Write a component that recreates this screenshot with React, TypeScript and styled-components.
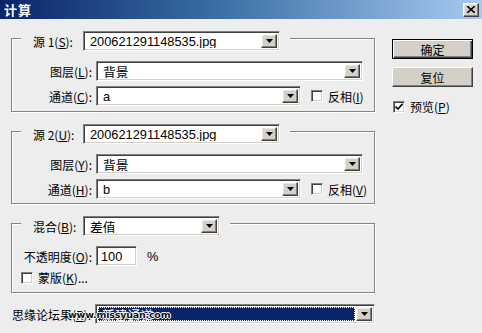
import React from "react";
import styled, { createGlobalStyle, css } from "styled-components";

const Global = createGlobalStyle`
  html, body { margin: 0; padding: 0; background: #ededed; }
  * { box-sizing: border-box; }
`;

const FONT = `"Liberation Sans", "Noto Sans CJK SC", sans-serif`;

const Window = styled.div`
  width: 482px;
  height: 333px;
  background: #ededed;
  overflow: hidden;
  font-family: ${FONT};
  font-size: 12px;
  color: #000;
  position: relative;
`;

const TitleBar = styled.div`
  height: 19px;
  background: linear-gradient(to right, #0a246a 0%, #3a6ea5 45%, #a6caf0 100%);
  display: flex;
  align-items: center;
  justify-content: space-between;
  padding: 0 3px 0 4px;
`;

const Title = styled.span`
  color: #fff;
  font-weight: bold;
  font-size: 13px;
  font-family: "Noto Sans CJK SC", sans-serif;
  letter-spacing: 1px;
`;

const raised = css`
  background: #d4d0c8;
  border-style: solid;
  border-width: 1px;
  border-color: #ffffff #404040 #404040 #ffffff;
  box-shadow: inset -1px -1px 0 #808080, inset 1px 1px 0 #e8e6e0;
`;

const CloseBtn = styled.div`
  ${raised};
  width: 16px;
  height: 14px;
  display: flex;
  align-items: center;
  justify-content: center;
`;

const Body = styled.div`
  display: flex;
  padding: 19px 0 0 11px;
`;

const Main = styled.div`
  width: 364px;
  display: flex;
  flex-direction: column;
`;

const Group = styled.div<{ $gap: number; $mb: number }>`
  border: 1px solid #848284;
  box-shadow: 1px 1px 0 #ffffff, inset 1px 1px 0 #ffffff;
  padding-bottom: ${(p) => p.$gap}px;
  margin-bottom: ${(p) => p.$mb}px;
  display: flex;
  flex-direction: column;
  gap: 5px;
`;

const Legend = styled.div`
  display: flex;
  align-items: center;
  gap: 5px;
  align-self: flex-start;
  margin: -8px 0 5px 9px;
  padding: 0 10px 0 12px;
  background: #ededed;
`;

const Row = styled.div<{ $h?: number }>`
  display: flex;
  align-items: center;
  height: ${(p) => p.$h ?? 20}px;
`;

const Label = styled.span<{ $w?: number }>`
  ${(p) => (p.$w ? `width: ${p.$w}px;` : "")}
  text-align: right;
  white-space: nowrap;
  font-family: "Noto Sans CJK SC", sans-serif;
  font-size: 12px;
  margin-right: 4px;
  u { text-decoration: underline; text-underline-offset: 1px; }
`;

const LegendLabel = styled.span`
  min-width: 45px;
  white-space: nowrap;
  font-family: "Noto Sans CJK SC", sans-serif;
  font-size: 12px;
`;

const sunken = css`
  border-style: solid;
  border-width: 1px;
  border-color: #808080 #ffffff #ffffff #808080;
  box-shadow: inset 1px 1px 0 #404040, inset -1px -1px 0 #d4d0c8;
`;

const ComboBox = styled.div<{ $w: number }>`
  ${sunken};
  width: ${(p) => p.$w}px;
  height: 20px;
  background: #fff;
  display: flex;
  align-items: stretch;
  padding: 2px;
`;

const ComboText = styled.div<{ $sel?: boolean }>`
  flex: 1;
  display: flex;
  align-items: center;
  padding-left: 4px;
  font-family: "Liberation Sans", "Noto Sans CJK SC", sans-serif;
  font-size: 12.8px;
  white-space: nowrap;
  overflow: hidden;
  ${(p) =>
    p.$sel
      ? css`
          background: #0a246a;
          color: #fff;
          outline: 1px dotted #ffffff;
          outline-offset: -1px;
          margin-right: 1px;
        `
      : ""}
`;

const ArrowBtn = styled.div`
  ${raised};
  width: 16px;
  display: flex;
  align-items: center;
  justify-content: center;
`;

const Arrow = () => (
  <svg width="7" height="4" viewBox="0 0 7 4">
    <path d="M0 0H7L3.5 4Z" fill="#000" />
  </svg>
);

const Combo: React.FC<{ w: number; text: string; sel?: boolean }> = ({ w, text, sel }) => (
  <ComboBox $w={w}>
    <ComboText $sel={sel}>{text}</ComboText>
    <ArrowBtn>
      <Arrow />
    </ArrowBtn>
  </ComboBox>
);

const TextInput = styled.div`
  ${sunken};
  width: 41px;
  height: 20px;
  background: #fff;
  display: flex;
  align-items: center;
  padding-left: 4px;
  font-size: 12.8px;
`;

const Check = styled.span<{ $ml?: number }>`
  ${sunken};
  width: 12px;
  height: 12px;
  background: #fff;
  margin-left: ${(p) => p.$ml ?? 0}px;
  margin-right: 5px;
  display: inline-flex;
  align-items: center;
  justify-content: center;
  flex-shrink: 0;
`;

const CheckText = styled.span`
  font-family: "Noto Sans CJK SC", sans-serif;
  font-size: 12px;
  white-space: nowrap;
`;

const Percent = styled.span`
  margin-left: 10px;
  font-size: 12.8px;
`;

const ResultRow = styled.div`
  display: flex;
  align-items: center;
  height: 20px;
  margin-top: 11px;
  position: relative;
`;

const Watermark = styled.span`
  position: absolute;
  left: 57px;
  top: 5px;
  font-family: "DejaVu Sans", sans-serif;
  font-weight: bold;
  font-size: 9.5px;
  color: #111;
  letter-spacing: -0.2px;
  text-shadow: 1px 0 0 #fff, -1px 0 0 #fff, 0 1px 0 #fff, 0 -1px 0 #fff;
`;

const Side = styled.div`
  margin-left: 17px;
  margin-top: 1px;
  display: flex;
  flex-direction: column;
  gap: 8px;
`;

const Button = styled.div<{ $def?: boolean }>`
  width: 81px;
  height: 20px;
  display: flex;
  align-items: center;
  justify-content: center;
  font-family: "Noto Sans CJK SC", sans-serif;
  font-size: 12px;
  background: #d4d0c8;
  border: 1px solid;
  border-color: #ffffff #404040 #404040 #ffffff;
  box-shadow: inset -1px -1px 0 #808080;
  ${(p) =>
    p.$def
      ? css`
          border: 1px solid #000;
          box-shadow: inset 1px 1px 0 #fff, inset -1px -1px 0 #404040, inset -2px -2px 0 #808080;
        `
      : ""}
`;

const PreviewRow = styled.div`
  display: flex;
  align-items: center;
  margin-top: 3px;
  padding-left: 1px;
`;

const U: React.FC<{ c: string }> = ({ c }) => <u>{c}</u>;

export default function App() {
  return (
    <>
      <Global />
      <Window>
        <TitleBar>
          <Title>计算</Title>
          <CloseBtn>
            <svg width="8" height="7" viewBox="0 0 8 7">
              <path d="M0 0L8 7M8 0L0 7" stroke="#000" strokeWidth="1.6" />
            </svg>
          </CloseBtn>
        </TitleBar>
        <Body>
          <Main>
            <Group $gap={5} $mb={19}>
              <Legend>
                <LegendLabel>
                  源 1(<U c="S" />):
                </LegendLabel>
                <Combo w={197} text="200621291148535.jpg" />
              </Legend>
              <Row>
                <Label $w={80}>
                  图层(<U c="L" />):
                </Label>
                <Combo w={267} text="背景" />
              </Row>
              <Row>
                <Label $w={80}>
                  通道(<U c="C" />):
                </Label>
                <Combo w={205} text="a" />
                <Check $ml={10} />
                <CheckText>
                  反相(<U c="I" />)
                </CheckText>
              </Row>
            </Group>
            <Group $gap={4} $mb={19}>
              <Legend>
                <LegendLabel>
                  源 2(<U c="U" />):
                </LegendLabel>
                <Combo w={197} text="200621291148535.jpg" />
              </Legend>
              <Row>
                <Label $w={80}>
                  图层(<U c="Y" />):
                </Label>
                <Combo w={267} text="背景" />
              </Row>
              <Row>
                <Label $w={80}>
                  通道(<U c="H" />):
                </Label>
                <Combo w={205} text="b" />
                <Check $ml={10} />
                <CheckText>
                  反相(<U c="V" />)
                </CheckText>
              </Row>
            </Group>
            <Group $gap={8} $mb={0}>
              <Legend>
                <LegendLabel>
                  混合(<U c="B" />):
                </LegendLabel>
                <Combo w={137} text="差值" />
              </Legend>
              <Row>
                <Label $w={80}>
                  不透明度(<U c="O" />):
                </Label>
                <TextInput>100</TextInput>
                <Percent>%</Percent>
              </Row>
              <Row $h={13}>
                <Check $ml={9} />
                <CheckText>
                  蒙版(<U c="K" />)...
                </CheckText>
              </Row>
            </Group>
            <ResultRow>
              <Label $w={80}>
                思缘论坛果(<U c="R" />):
              </Label>
              <Combo w={280} text="新建通道" sel />
              <Watermark>www.missyuan.com</Watermark>
            </ResultRow>
          </Main>
          <Side>
            <Button $def>确定</Button>
            <Button>复位</Button>
            <PreviewRow>
              <Check>
                <svg width="8" height="7" viewBox="0 0 8 7">
                  <path d="M0.5 3.5L3 6L7.5 0.8" stroke="#000" strokeWidth="1.6" fill="none" />
                </svg>
              </Check>
              <CheckText>
                预览(<U c="P" />)
              </CheckText>
            </PreviewRow>
          </Side>
        </Body>
      </Window>
    </>
  );
}
